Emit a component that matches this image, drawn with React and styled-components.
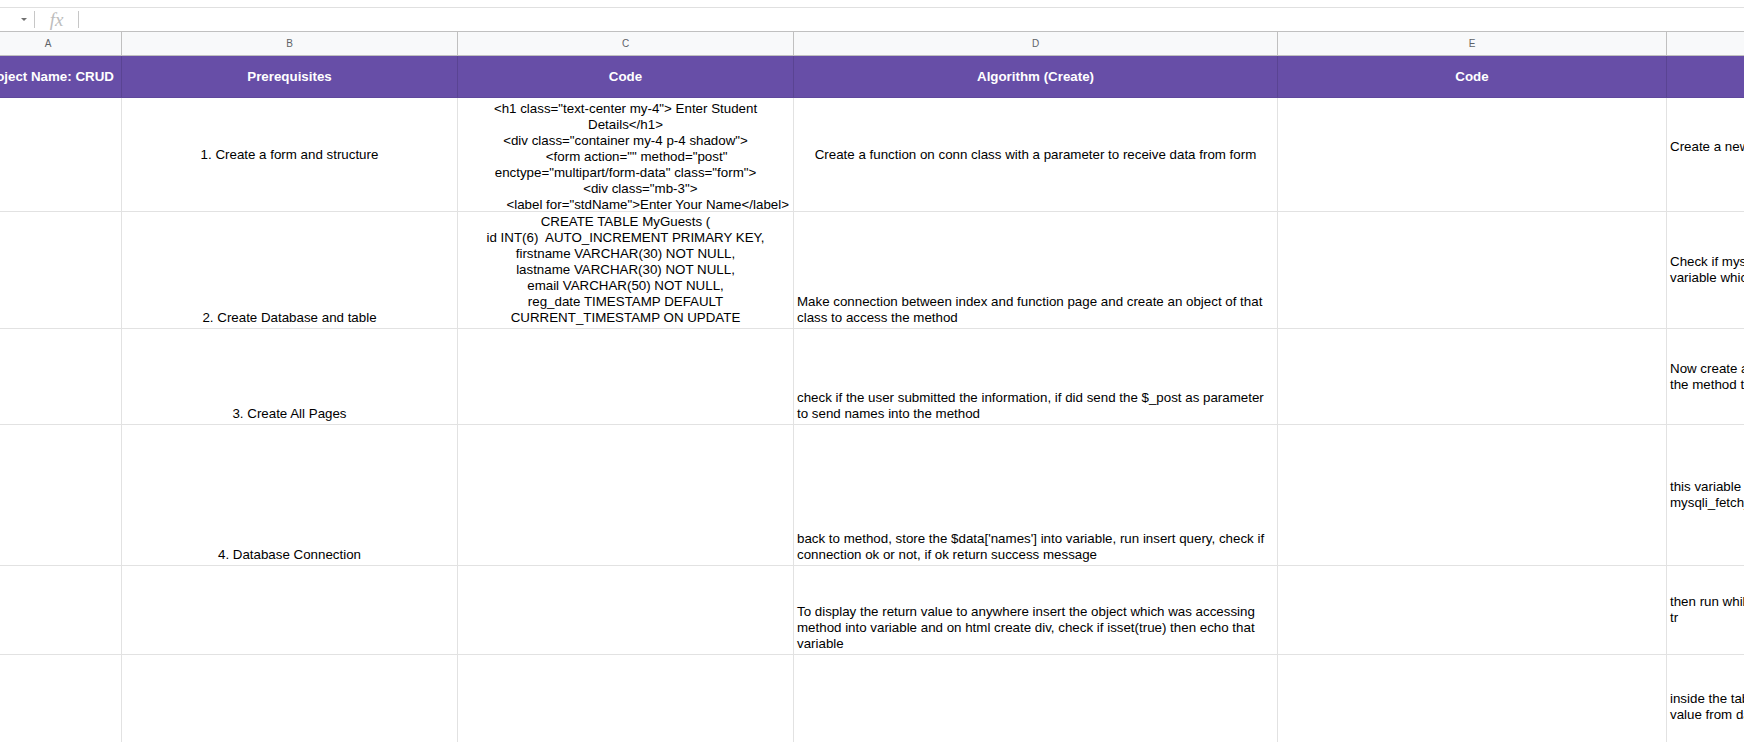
import React from 'react';
import styled, { createGlobalStyle } from 'styled-components';

const GlobalStyle = createGlobalStyle`
  html, body {
    margin: 0;
    padding: 0;
    background: #fff;
    overflow: hidden;
  }
  body {
    font-family: "Liberation Sans", Arial, sans-serif;
  }
`;

const Page = styled.div`
  width: 1744px;
  height: 742px;
  overflow: hidden;
  background: #fff;
`;

const TopStrip = styled.div`
  height: 7px;
  border-bottom: 1px solid #e0e0e0;
`;

const FormulaBar = styled.div`
  display: flex;
  align-items: center;
  height: 23px;
  border-bottom: 1px solid #c0c0c0;
`;

const NameBox = styled.div`
  width: 34px;
  height: 100%;
  box-sizing: border-box;
  display: flex;
  align-items: center;
  justify-content: flex-end;
  padding-right: 7px;
`;

const Caret = styled.span`
  width: 0;
  height: 0;
  border-left: 3px solid transparent;
  border-right: 3px solid transparent;
  border-top: 3px solid #707070;
`;

const Divider = styled.div`
  width: 1px;
  height: 17px;
  background: #c7c7c7;
`;

const FxLabel = styled.span`
  width: 43px;
  text-align: center;
  font-family: "Liberation Serif", "DejaVu Serif", serif;
  font-style: italic;
  font-size: 19px;
  line-height: 1;
  color: #bdbdbd;
`;

const Viewport = styled.div`
  overflow: hidden;
`;

const Grid = styled.div`
  display: grid;
  grid-template-columns: ${p => p.$cols.map(c => `${c}px`).join(' ')};
  grid-template-rows: ${p => p.$rows.map(r => `${r}px`).join(' ')};
  width: max-content;
  margin-left: -25px;
`;

const ColumnLetter = styled.div`
  box-sizing: border-box;
  display: flex;
  align-items: center;
  justify-content: center;
  background: #f8f9fa;
  border-right: 1px solid #c0c0c0;
  border-bottom: 1px solid #c0c0c0;
  font-family: "Liberation Sans", Arial, sans-serif;
  font-size: 10px;
  color: #5f6368;
`;

const HeadCell = styled.div`
  box-sizing: border-box;
  display: flex;
  align-items: center;
  justify-content: center;
  background: #674ea7;
  border-right: 1px solid #5a4493;
  border-bottom: 1px solid #5f489c;
  color: #fff;
  font-weight: bold;
  font-size: 13.33px;
  white-space: nowrap;
  overflow: hidden;
`;

const justify = { top: 'flex-start', middle: 'center', bottom: 'flex-end' };
const pads = { top: '3px 3px 0', middle: '0 3px', bottom: '0 3px 2px' };

const Cell = styled.div`
  box-sizing: border-box;
  display: flex;
  flex-direction: column;
  justify-content: ${p => justify[p.$v]};
  text-align: ${p => p.$h};
  padding: ${p => pads[p.$v]};
  border-right: 1px solid #e2e2e2;
  border-bottom: 1px solid #e2e2e2;
  overflow: hidden;
  white-space: pre;
  font-size: 13.33px;
  line-height: 16px;
  color: #000;
`;

const cols = [147, 336, 336, 484, 389, 420];
const rowHeights = [24, 42, 114, 117, 96, 141, 89, 136];

const letters = ['A', 'B', 'C', 'D', 'E', 'F'];
const headings = ['Project Name: CRUD', 'Prerequisites', 'Code', 'Algorithm (Create)', 'Code', ''];

const codeForm = `<h1 class="text-center my-4"> Enter Student
Details</h1>
<div class="container my-4 p-4 shadow">
      <form action="" method="post"
enctype="multipart/form-data" class="form">
        <div class="mb-3">
            <label for="stdName">Enter Your Name</label>`;

const codeTable = `CREATE TABLE MyGuests (
id INT(6)  AUTO_INCREMENT PRIMARY KEY,
firstname VARCHAR(30) NOT NULL,
lastname VARCHAR(30) NOT NULL,
email VARCHAR(50) NOT NULL,
reg_date TIMESTAMP DEFAULT
CURRENT_TIMESTAMP ON UPDATE`;

const L = (text, v = 'bottom') => ({ text, h: 'left', v });
const C = (text, v = 'bottom') => ({ text, h: 'center', v });
const E = { text: '', h: 'left', v: 'bottom' };

const rows = [
  [
    E,
    C('1. Create a form and structure', 'middle'),
    C(codeForm, 'top'),
    C('Create a function on conn class with a parameter to receive data from form', 'middle'),
    E,
    L('Create a new function to show the data from database\n\u00a0', 'middle'),
  ],
  [
    E,
    C('2. Create Database and table'),
    C(codeTable),
    L('Make connection between index and function page and create an object of that\nclass to access the method'),
    E,
    L('Check if mysqli_query returned any rows, if yes store it into a\nvariable which holds the result', 'middle'),
  ],
  [
    E,
    C('3. Create All Pages'),
    E,
    L('check if the user submitted the information, if did send the $_post as parameter\nto send names into the method'),
    E,
    L('Now create a function on index page and call\nthe method to get the data', 'middle'),
  ],
  [
    E,
    C('4. Database Connection'),
    E,
    L("back to method, store the $data['names'] into variable, run insert query, check if\nconnection ok or not, if ok return success message"),
    E,
    L('this variable store the data into array using\nmysqli_fetch_assoc function', 'middle'),
  ],
  [
    E,
    E,
    E,
    L('To display the return value to anywhere insert the object which was accessing\nmethod into variable and on html create div, check if isset(true) then echo that\nvariable'),
    E,
    L('then run while loop on the table and echo each row inside the\ntr', 'middle'),
  ],
  [
    E,
    E,
    E,
    E,
    E,
    L('inside the table body echo the data and get the\nvalue from database\n\u00a0\nFor loop on each row', 'middle'),
  ],
];

const App = () => (
  <Page>
    <GlobalStyle />
    <TopStrip />
    <FormulaBar>
      <NameBox>
        <Caret />
      </NameBox>
      <Divider />
      <FxLabel>fx</FxLabel>
      <Divider />
    </FormulaBar>
    <Viewport>
      <Grid $cols={cols} $rows={rowHeights}>
        {letters.map(l => (
          <ColumnLetter key={l}>{l}</ColumnLetter>
        ))}
        {headings.map((h, i) => (
          <HeadCell key={i}>{h}</HeadCell>
        ))}
        {rows.map((row, r) =>
          row.map((cell, c) => (
            <Cell key={`${r}-${c}`} $h={cell.h} $v={cell.v}>
              {cell.text}
            </Cell>
          ))
        )}
      </Grid>
    </Viewport>
  </Page>
);

export default App;
